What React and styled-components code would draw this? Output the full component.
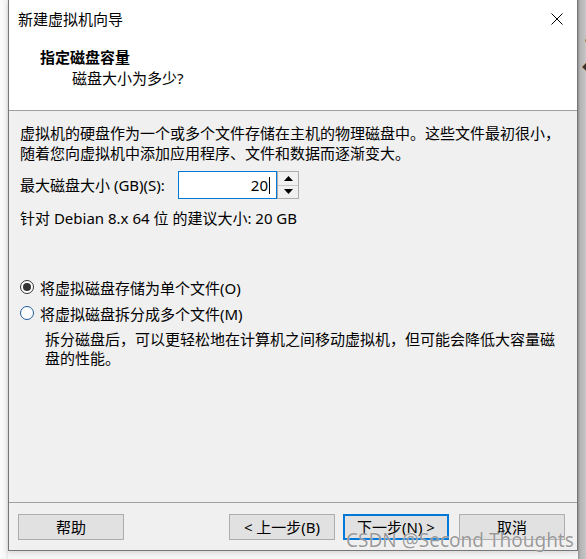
import React from 'react';
import styled, { createGlobalStyle } from 'styled-components';

const GlobalStyle = createGlobalStyle`
  html, body {
    margin: 0;
    padding: 0;
    background: #f7f7f7;
  }
  * {
    box-sizing: border-box;
  }
`;

const Screen = styled.div`
  position: relative;
  display: flex;
  width: 586px;
  height: 559px;
  overflow: hidden;
  font-family: "Noto Sans", "Noto Sans CJK SC", sans-serif;
  font-size: 15px;
  color: #000;
  background: #f6f6f6;
`;

const Gutter = styled.div`
  width: 8px;
  flex: none;
  background: linear-gradient(90deg, #fcfcfc 0, #f4f4f4 6px, #e6e6e6 8px);
`;

const Dialog = styled.div`
  width: 570px;
  height: 551px;
  flex: none;
  display: flex;
  flex-direction: column;
  background: #f0f0f0;
  border: 1px solid #767676;
  border-top: none;
  box-shadow: 0 2px 5px rgba(0, 0, 0, 0.12);
`;

const BackWindow = styled.div`
  flex: 1;
  display: flex;
  flex-direction: column;
  gap: 16px;
  padding: 36px 0 0 4px;
  background: linear-gradient(90deg, #8f8f8f 0, #b4b4b4 2px, #c6c6c6 100%);
  overflow: hidden;
  color: #333;
  font-size: 10px;
  line-height: 1;
`;

const TitleBar = styled.div`
  height: 38px;
  flex: none;
  display: flex;
  align-items: center;
  justify-content: space-between;
  padding: 0 14px 0 9px;
  background: #fff;
  line-height: 20px;
`;

const Header = styled.div`
  height: 73px;
  flex: none;
  padding-top: 9px;
  background: #fff;
  border-bottom: 1px solid #a0a0a0;
`;

const HeaderTitle = styled.div`
  padding-left: 31px;
  font-weight: bold;
  line-height: 20px;
`;

const HeaderSub = styled.div`
  padding-left: 63px;
  line-height: 22px;
`;

const Body = styled.div`
  flex: 1;
  padding: 12px 10px 0 11px;
`;

const Paragraph = styled.p`
  margin: 0;
  line-height: 20px;
  white-space: nowrap;
`;

const SizeRow = styled.div`
  display: flex;
  align-items: center;
  margin-top: 8px;
  height: 28px;
`;

const Label = styled.span`
  width: 158px;
  line-height: 20px;
`;

const NumberBox = styled.div`
  width: 99px;
  height: 28px;
  display: flex;
  align-items: center;
  justify-content: flex-end;
  padding-right: 6px;
  background: #fff;
  border: 1px solid #0078d7;
`;

const Caret = styled.span`
  width: 1px;
  height: 17px;
  margin-left: 1px;
  background: #000;
`;

const Spinner = styled.div`
  width: 22px;
  height: 28px;
  display: flex;
  flex-direction: column;
  border: 1px solid #adadad;
  background: #f0f0f0;
`;

const SpinButton = styled.div`
  flex: 1;
  display: flex;
  align-items: center;
  justify-content: center;
  border-top: ${(p) => (p.$bottom ? '1px solid #c8c8c8' : 'none')};
`;

const Hint = styled.div`
  margin-top: 9px;
  line-height: 20px;
`;

const Options = styled.div`
  margin-top: 49px;
  display: flex;
  flex-direction: column;
  gap: 6px;
`;

const RadioRow = styled.label`
  display: flex;
  align-items: center;
  height: 20px;
  gap: 6px;
`;

const RadioCircle = styled.span`
  width: 14px;
  height: 14px;
  border-radius: 50%;
  border: 1px solid ${(p) => (p.$checked ? '#333' : '#1d5a96')};
  background: #fff;
  display: flex;
  align-items: center;
  justify-content: center;

  &::after {
    content: '';
    width: 8px;
    height: 8px;
    border-radius: 50%;
    background: ${(p) => (p.$checked ? '#333' : 'transparent')};
  }
`;

const Description = styled.p`
  margin: 7px 0 0 25px;
  line-height: 19px;
  white-space: nowrap;
`;

const Footer = styled.div`
  height: 48px;
  flex: none;
  display: flex;
  align-items: flex-start;
  padding: 11px 10px 0 9px;
  border-top: 1px solid #a0a0a0;
`;

const Button = styled.div`
  width: 106px;
  height: 26px;
  display: flex;
  align-items: center;
  justify-content: center;
  background: #e1e1e1;
  border: ${(p) => (p.$focused ? '2px solid #0078d7' : '1px solid #adadad')};
  line-height: 20px;
  margin-left: ${(p) => p.$gap || 0}px;
`;

const Watermark = styled.div`
  position: absolute;
  left: 346px;
  top: 527px;
  font-size: 19px;
  line-height: 26px;
  color: rgba(120, 120, 120, 0.75);
  text-shadow: 0 0 1px #fff;
  white-space: nowrap;
`;

const Arrow = ({ up }) => (
  <svg width="9" height="5" viewBox="0 0 9 5">
    <path d={up ? 'M0 5 L4.5 0 L9 5 Z' : 'M0 0 L4.5 5 L9 0 Z'} fill="#000" />
  </svg>
);

const CloseIcon = () => (
  <svg width="12" height="12" viewBox="0 0 12 12">
    <path d="M0.5 0.5 L11.5 11.5 M11.5 0.5 L0.5 11.5" stroke="#000" strokeWidth="1" />
  </svg>
);

export default function App() {
  return (
    <>
      <GlobalStyle />
      <Screen>
        <Gutter />
        <Dialog>
          <TitleBar>
            <span>新建虚拟机向导</span>
            <CloseIcon />
          </TitleBar>
          <Header>
            <HeaderTitle>指定磁盘容量</HeaderTitle>
            <HeaderSub>磁盘大小为多少?</HeaderSub>
          </Header>
          <Body>
            <Paragraph>
              虚拟机的硬盘作为一个或多个文件存储在主机的物理磁盘中。这些文件最初很小，
              <br />
              随着您向虚拟机中添加应用程序、文件和数据而逐渐变大。
            </Paragraph>
            <SizeRow>
              <Label>最大磁盘大小 (GB)(S):</Label>
              <NumberBox>
                20
                <Caret />
              </NumberBox>
              <Spinner>
                <SpinButton>
                  <Arrow up />
                </SpinButton>
                <SpinButton $bottom>
                  <Arrow />
                </SpinButton>
              </Spinner>
            </SizeRow>
            <Hint>针对 Debian 8.x 64 位 的建议大小: 20 GB</Hint>
            <Options>
              <RadioRow>
                <RadioCircle $checked />
                将虚拟磁盘存储为单个文件(O)
              </RadioRow>
              <RadioRow>
                <RadioCircle />
                将虚拟磁盘拆分成多个文件(M)
              </RadioRow>
            </Options>
            <Description>
              拆分磁盘后，可以更轻松地在计算机之间移动虚拟机，但可能会降低大容量磁
              <br />
              盘的性能。
            </Description>
          </Body>
          <Footer>
            <Button>帮助</Button>
            <Button $gap={105}>&lt; 上一步(B)</Button>
            <Button $gap={8} $focused>下一步(N) &gt;</Button>
            <Button $gap={10}>取消</Button>
          </Footer>
        </Dialog>
        <BackWindow>
          <span>▪</span>
          <span>◆</span>
        </BackWindow>
        <Watermark>CSDN @Second Thoughts</Watermark>
      </Screen>
    </>
  );
}
